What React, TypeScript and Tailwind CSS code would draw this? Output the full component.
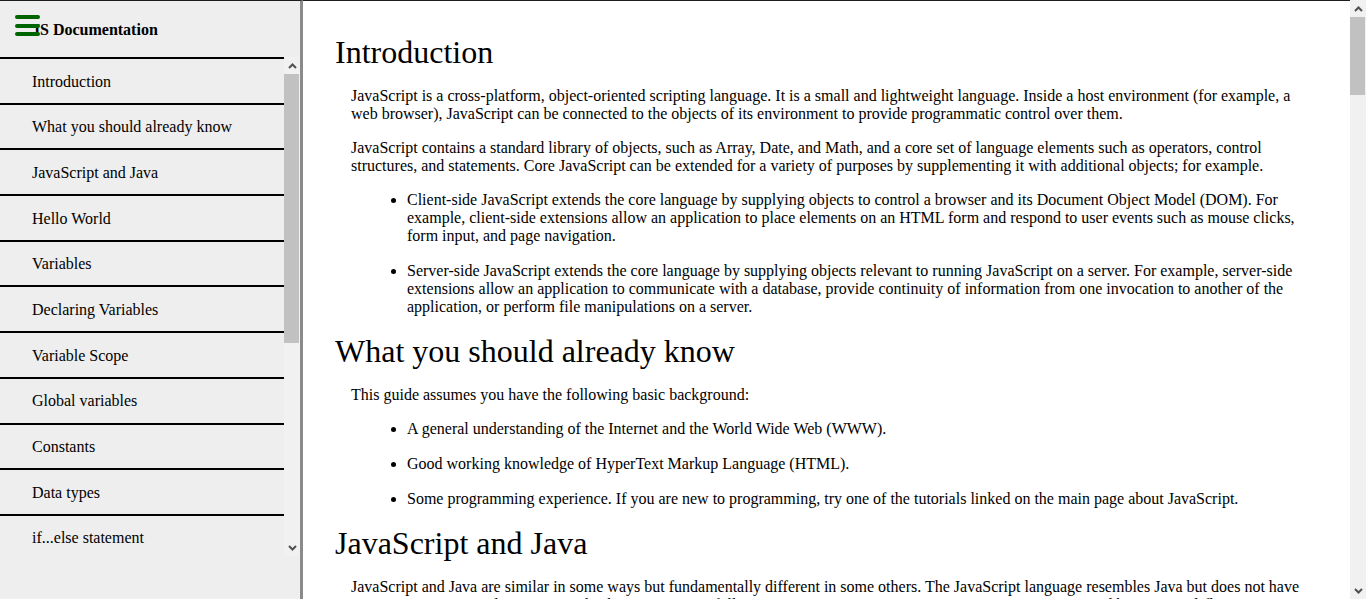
import React from 'react';

const navItems = [
  'Introduction',
  'What you should already know',
  'JavaScript and Java',
  'Hello World',
  'Variables',
  'Declaring Variables',
  'Variable Scope',
  'Global variables',
  'Constants',
  'Data types',
  'if...else statement',
  'while statement',
  'switch statement',
  'for loop',
  'Function declarations',
  'Arrow functions',
  'Objects',
  'Arrays',
  'Reference',
];

interface Section {
  title: string;
  paragraphs: string[];
  bullets?: string[];
  after?: string[];
}

const sections: Section[] = [
  {
    title: 'Introduction',
    paragraphs: [
      'JavaScript is a cross-platform, object-oriented scripting language. It is a small and lightweight language. Inside a host environment (for example, a web browser), JavaScript can be connected to the objects of its environment to provide programmatic control over them.',
      'JavaScript contains a standard library of objects, such as Array, Date, and Math, and a core set of language elements such as operators, control structures, and statements. Core JavaScript can be extended for a variety of purposes by supplementing it with additional objects; for example.',
    ],
    bullets: [
      'Client-side JavaScript extends the core language by supplying objects to control a browser and its Document Object Model (DOM). For example, client-side extensions allow an application to place elements on an HTML form and respond to user events such as mouse clicks, form input, and page navigation.',
      'Server-side JavaScript extends the core language by supplying objects relevant to running JavaScript on a server. For example, server-side extensions allow an application to communicate with a database, provide continuity of information from one invocation to another of the application, or perform file manipulations on a server.',
    ],
  },
  {
    title: 'What you should already know',
    paragraphs: ['This guide assumes you have the following basic background:'],
    bullets: [
      'A general understanding of the Internet and the World Wide Web (WWW).',
      'Good working knowledge of HyperText Markup Language (HTML).',
      'Some programming experience. If you are new to programming, try one of the tutorials linked on the main page about JavaScript.',
    ],
  },
  {
    title: 'JavaScript and Java',
    paragraphs: [
      "JavaScript and Java are similar in some ways but fundamentally different in some others. The JavaScript language resembles Java but does not have Java's static typing and strong type checking. JavaScript follows most Java expression syntax, naming conventions and basic control-flow constructs which was the reason why it was renamed from LiveScript to JavaScript.",
      "In contrast to Java's compile-time system of classes built by declarations, JavaScript supports a runtime system based on a small number of data types representing numeric, Boolean, and string values. JavaScript has a prototype-based object model instead of the more common class-based object model.",
      'JavaScript also supports functions without any special declarative requirements. Functions can be properties of objects, executing as loosely typed methods.',
      'JavaScript is a very free-form language compared to Java. You do not have to declare all variables, classes, and methods. You do not have to be concerned with whether methods are public, private, or protected, and you do not have to implement interfaces.',
    ],
  },
  {
    title: 'Hello World',
    paragraphs: [
      'To get started with writing JavaScript, open the Scratchpad and write your first "Hello world" JavaScript code:',
      'function greetMe(yourName) { alert("Hello " + yourName); } greetMe("World");',
      'Select the code in the pad and hit Ctrl+R to watch it unfold in your browser!',
    ],
  },
  {
    title: 'Variables',
    paragraphs: [
      'You use variables as symbolic names for values in your application. The names of variables, called identifiers, conform to certain rules.',
      'A JavaScript identifier must start with a letter, underscore (_), or dollar sign ($); subsequent characters can also be digits (0-9). Because JavaScript is case sensitive, letters include the characters "A" through "Z" (uppercase) and the characters "a" through "z" (lowercase).',
      'You can use ISO 8859-1 or Unicode letters such as å and ü in identifiers. You can also use the Unicode escape sequences as characters in identifiers. Some examples of legal names are Number_hits, temp99, and _name.',
    ],
  },
  {
    title: 'Declaring Variables',
    paragraphs: ['You can declare a variable in three ways:'],
    bullets: [
      'With the keyword var. For example, var x = 42. This syntax can be used to declare both local and global variables.',
      "By simply assigning it a value. For example, y = 42. This always declares a global variable. It generates a strict JavaScript warning. You shouldn't use this variant.",
      'With the keyword let. For example, let y = 13. This syntax can be used to declare a block scope local variable.',
    ],
  },
  {
    title: 'Variable Scope',
    paragraphs: [
      'When you declare a variable outside of any function, it is called a global variable, because it is available to any other code in the current document. When you declare a variable within a function, it is called a local variable, because it is available only within that function.',
      'JavaScript before ECMAScript 2015 does not have block statement scope; rather, a variable declared within a block is local to the function (or global scope) that the block resides within.',
      'This behavior changes, when using the let declaration introduced in ECMAScript 2015.',
    ],
  },
  {
    title: 'Global variables',
    paragraphs: [
      'Global variables are in fact properties of the global object. In web pages the global object is window, so you can set and access global variables using the window.variable syntax.',
      'Consequently, you can access global variables declared in one window or frame from another window or frame by specifying the window or frame name. For example, if a variable called phoneNumber is declared in a document, you can refer to this variable from an iframe as parent.phoneNumber.',
    ],
  },
  {
    title: 'Constants',
    paragraphs: [
      'You can create a read-only, named constant with the const keyword. The syntax of a constant identifier is the same as for a variable identifier: it must start with a letter, underscore or dollar sign and can contain alphabetic, numeric, or underscore characters.',
      'A constant cannot change value through assignment or be re-declared while the script is running. It has to be initialized to a value.',
      'The scope rules for constants are the same as those for let block scope variables. If the const keyword is omitted, the identifier is assumed to represent a variable.',
    ],
  },
  {
    title: 'Data types',
    paragraphs: ['The latest ECMAScript standard defines seven data types:'],
    bullets: [
      'Six data types that are primitives: Boolean. true and false. null. A special keyword denoting a null value. undefined. A top-level property whose value is undefined. Number. 42 or 3.14159. String. "Howdy". Symbol (new in ECMAScript 2015).',
      'and Object',
    ],
    after: [
      'Although these data types are a relatively small amount, they enable you to perform useful functions with your applications. Objects and functions are the other fundamental elements in the language.',
    ],
  },
  {
    title: 'if...else statement',
    paragraphs: [
      'Use the if statement to execute a statement if a logical condition is true. Use the optional else clause to execute a statement if the condition is false. An if statement looks as follows:',
      'if (condition) { statement_1; } else { statement_2; }',
      'condition can be any expression that evaluates to true or false. If condition evaluates to true, statement_1 is executed; otherwise, statement_2 is executed.',
    ],
  },
  {
    title: 'while statement',
    paragraphs: [
      'A while statement executes its statements as long as a specified condition evaluates to true. A while statement looks as follows:',
      'while (condition) statement',
      'If the condition becomes false, statement within the loop stops executing and control passes to the statement following the loop.',
    ],
  },
  {
    title: 'Function declarations',
    paragraphs: [
      'A function definition (also called a function declaration, or function statement) consists of the function keyword, followed by:',
    ],
    bullets: [
      'The name of the function.',
      'A list of arguments to the function, enclosed in parentheses and separated by commas.',
      'The JavaScript statements that define the function, enclosed in curly brackets, { }.',
    ],
  },
  {
    title: 'Reference',
    paragraphs: ['All the documentation in this page is taken from MDN'],
  },
];

const Chevron: React.FC<{ down?: boolean }> = ({ down }) => (
  <svg width="9" height="6" viewBox="0 0 9 6" className={down ? 'rotate-180' : ''}>
    <polyline points="1,5 4.5,1.5 8,5" fill="none" stroke="#505050" strokeWidth="2" />
  </svg>
);

// classic scrollbar look, drawn by hand (headless browser hides real ones)
const FakeScrollbar: React.FC<{ thumbTop: number; thumbHeight: number }> = ({ thumbTop, thumbHeight }) => (
  <div className="flex h-full w-4 shrink-0 flex-col bg-[#f1f1f1]">
    <div className="flex h-[17px] shrink-0 items-center justify-center">
      <Chevron />
    </div>
    <div className="flex flex-1 flex-col">
      <div className="shrink-0" style={{ height: thumbTop }} />
      <div className="w-[15px] shrink-0 bg-[#c1c1c1]" style={{ height: thumbHeight }} />
    </div>
    <div className="flex h-[17px] shrink-0 items-center justify-center">
      <Chevron down />
    </div>
  </div>
);

const Hamburger: React.FC = () => (
  <div className="absolute left-[15px] top-[14px] flex w-[25px] flex-col gap-[4.5px]">
    <span className="block h-[4px] w-full rounded-full bg-[#006400]" />
    <span className="block h-[4px] w-full rounded-full bg-[#006400]" />
    <span className="block h-[4px] w-full rounded-full bg-[#006400]" />
  </div>
);

const App: React.FC = () => {
  return (
    <div
      className="flex h-[599px] w-full overflow-hidden bg-white text-black"
      style={{ fontFamily: '"Liberation Serif", "Times New Roman", serif' }}
    >
      {/* Sidebar */}
      <nav className="relative flex h-full w-[303px] shrink-0 flex-col border-t border-r-[3px] border-t-[#1c1c1c] border-r-[#8a8a8a] bg-[#eeeeee]">
        <Hamburger />
        <header className="flex h-[56px] items-center pl-8 pt-[2px] text-[16px] font-bold leading-[normal]">
          JS Documentation
        </header>
        <div className="flex h-[499px] w-[300px]">
          <ul className="h-full w-[284px] overflow-hidden">
            {navItems.map((item) => (
              <li key={item} className="border-t-2 border-black">
                <a href="#" className="block pb-[12.2px] pl-8 pt-[13.5px] text-[16px] leading-[normal] text-black">
                  {item}
                </a>
              </li>
            ))}
          </ul>
          <FakeScrollbar thumbTop={0} thumbHeight={269} />
        </div>
      </nav>

      {/* Main content */}
      <main className="h-full flex-1 overflow-hidden">
        <div className="border-t border-[#1c1c1c] px-8 pt-[33px] text-[16px] leading-[normal]">
          {sections.map((s) => (
            <section key={s.title}>
              <h2 className="mb-4 text-[32px] font-normal leading-[normal]">{s.title}</h2>
              {s.paragraphs.map((p, i) => (
                <p key={i} className="mb-4 pl-4">
                  {p}
                </p>
              ))}
              {s.bullets && (
                <ul className="list-disc pl-[72px]">
                  {s.bullets.map((b, i) => (
                    <li key={i} className="mb-[17px]">
                      {b}
                    </li>
                  ))}
                </ul>
              )}
              {s.after?.map((p, i) => (
                <p key={i} className="mb-4 pl-4">
                  {p}
                </p>
              ))}
            </section>
          ))}
        </div>
      </main>
      <FakeScrollbar thumbTop={0} thumbHeight={78} />
    </div>
  );
};

export default App;
